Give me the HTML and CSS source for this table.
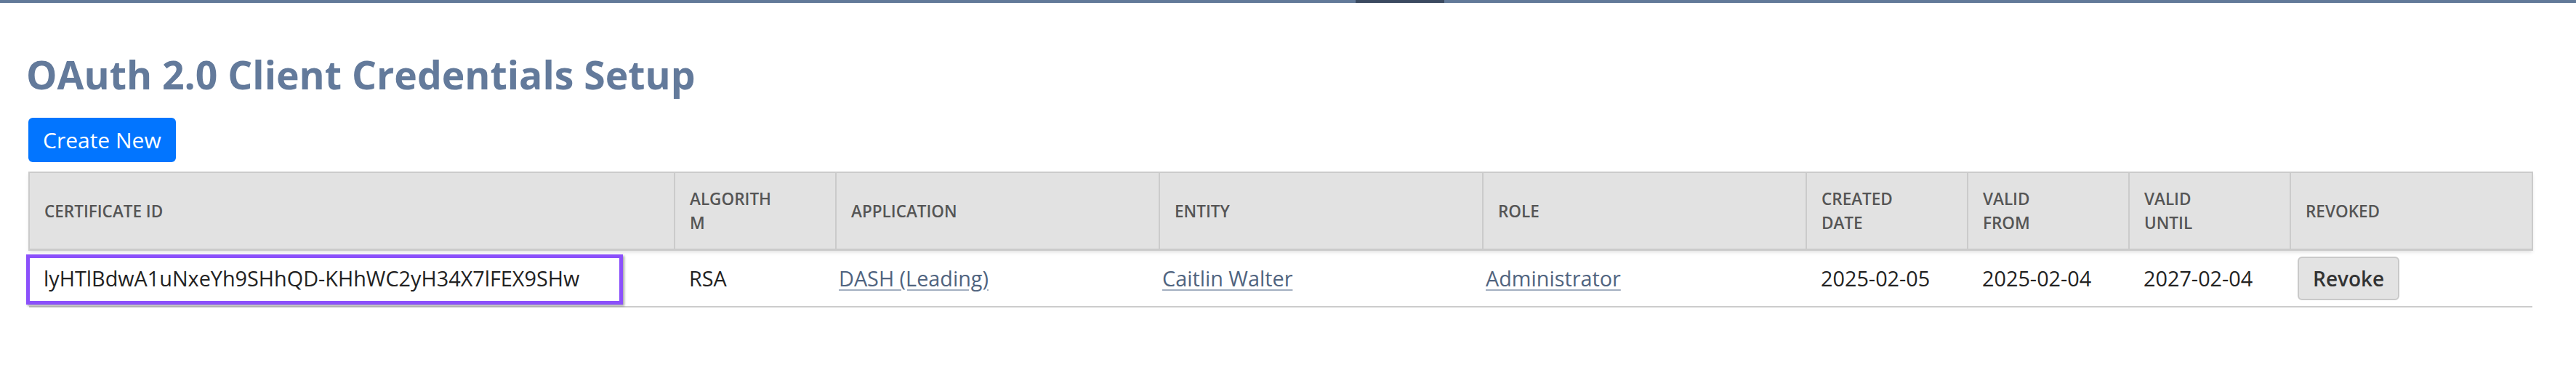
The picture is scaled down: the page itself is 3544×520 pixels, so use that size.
FILE: index.html
```html
<!DOCTYPE html>
<html lang="en">
<head>
<meta charset="utf-8">
<title>OAuth 2.0 Client Credentials Setup</title>
<link rel="stylesheet" href="styles.css">
</head>
<body>
<div class="topbar"><span class="seg seg-a"></span><span class="seg seg-b"></span><span class="seg seg-c"></span></div>
<main class="page">
  <h1 class="title">OAuth 2.0 Client Credentials Setup</h1>
  <button class="btn-primary" type="button">Create New</button>
  <table class="creds">
    <colgroup>
      <col class="c-id"><col class="c-alg"><col class="c-app"><col class="c-ent"><col class="c-role"><col class="c-date"><col class="c-date"><col class="c-date"><col class="c-rev">
    </colgroup>
    <thead>
      <tr>
        <th>Certificate ID</th>
        <th>Algorith<br>m</th>
        <th>Application</th>
        <th>Entity</th>
        <th>Role</th>
        <th>Created<br>Date</th>
        <th>Valid<br>From</th>
        <th>Valid<br>Until</th>
        <th>Revoked</th>
      </tr>
    </thead>
    <tbody>
      <tr>
        <td class="id-cell"><span class="highlight"></span>lyHTlBdwA1uNxeYh9SHhQD-KHhWC2yH34X7lFEX9SHw</td>
        <td>RSA</td>
        <td class="link-cell"><a href="#">DASH (Leading)</a></td>
        <td class="link-cell"><a href="#">Caitlin Walter</a></td>
        <td class="link-cell"><a href="#">Administrator</a></td>
        <td>2025-02-05</td>
        <td>2025-02-04</td>
        <td>2027-02-04</td>
        <td class="rev-cell"><button class="btn-revoke" type="button">Revoke</button></td>
      </tr>
    </tbody>
  </table>
</main>
</body>
</html>
```

FILE: styles.css
```css
html, body {
  margin: 0;
  padding: 0;
  background: #ffffff;
}
body {
  font-family: "Open Sans", "Noto Sans", sans-serif;
  color: #222222;
}
.topbar {
  display: flex;
  height: 4px;
}
.seg-a { width: 1865px; background: #627a99; }
.seg-b { width: 122px; background: #3b4a60; }
.seg-c { flex: 1; background: #627a99; }

.page {
  padding: 0 61px 0 39px;
}
.title {
  margin: 67px 0 0 -3px;
  font-size: 53.5px;
  line-height: 63px;
  font-weight: 700;
  color: #637a9b;
}
.btn-primary {
  display: block;
  margin-top: 28px;
  font-family: inherit;
  font-size: 30px;
  line-height: 45px;
  padding: 8px 20px;
  border: 0;
  border-radius: 6px;
  background: #0275ff;
  color: #ffffff;
  white-space: nowrap;
}
.creds {
  margin-top: 13px;
  width: 3444px;
  table-layout: fixed;
  border-collapse: collapse;
}
.c-id { width: 888px; }
.c-alg { width: 222px; }
.c-app, .c-ent, .c-role { width: 445px; }
.c-date { width: 222px; }
.c-rev { width: 333px; }

.creds thead tr {
  box-shadow: 0 3px 5px rgba(0, 0, 0, 0.12);
}
.creds th {
  background: #e2e2e2;
  border: 2px solid #cbcbcb;
  border-bottom-width: 3px;
  padding: 19px 20px;
  text-align: left;
  vertical-align: middle;
  font-size: 22.5px;
  line-height: 33px;
  font-weight: 600;
  text-transform: uppercase;
  color: #555555;
}
.creds td {
  padding: 8px 20px;
  font-size: 28.8px;
  line-height: 42px;
  vertical-align: middle;
  border-bottom: 2px solid #cccccc;
  color: #222222;
  white-space: nowrap;
}
.creds a {
  color: #50647f;
  text-decoration: underline;
  text-decoration-color: #a3afc0;
  text-underline-offset: 4px;
}
.creds .link-cell {
  padding-left: 4px;
}
.creds .id-cell {
  position: relative;
}
.highlight {
  position: absolute;
  left: -4px;
  top: 5px;
  width: 811px;
  height: 59px;
  border: 5px solid #8b50fb;
  box-shadow: 2px 2px 3px rgba(0, 0, 0, 0.35);
  pointer-events: none;
}
.creds .rev-cell {
  padding-left: 10px;
}
.btn-revoke {
  font-family: inherit;
  font-size: 28px;
  line-height: 42px;
  font-weight: 600;
  color: #333333;
  background: #e3e3e3;
  border: 2px solid #c9c9c9;
  border-radius: 6px;
  padding: 7px 19px;
  width: 140px;
}
```
